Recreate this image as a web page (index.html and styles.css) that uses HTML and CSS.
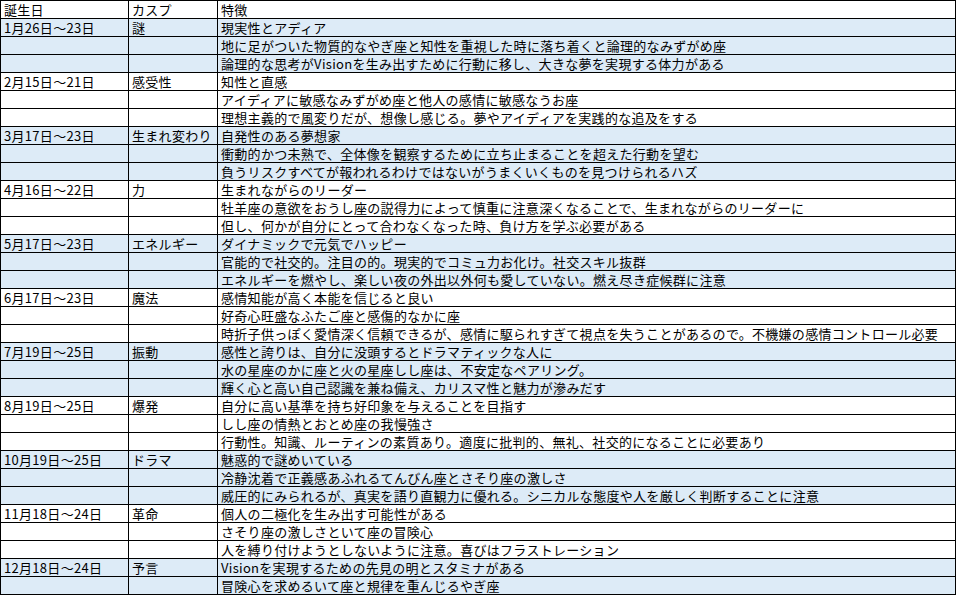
FILE: index.html
```html
<!DOCTYPE html>
<html lang="ja">
<head>
<meta charset="utf-8">
<title>カスプ</title>
<link rel="stylesheet" href="styles.css">
</head>
<body>
<div class="sheet">
  <div class="c">誕生日</div><div class="c">カスプ</div><div class="c">特徴</div>

  <div class="c b">1月26日～23日</div><div class="c b">謎</div><div class="c b">現実性とアディア</div>
  <div class="c b"></div><div class="c b"></div><div class="c b">地に足がついた物質的なやぎ座と知性を重視した時に落ち着くと論理的なみずがめ座</div>
  <div class="c b"></div><div class="c b"></div><div class="c b">論理的な思考がVisionを生み出すために行動に移し、大きな夢を実現する体力がある</div>

  <div class="c">2月15日～21日</div><div class="c">感受性</div><div class="c">知性と直感</div>
  <div class="c"></div><div class="c"></div><div class="c">アイディアに敏感なみずがめ座と他人の感情に敏感なうお座</div>
  <div class="c"></div><div class="c"></div><div class="c">理想主義的で風変りだが、想像し感じる。夢やアイディアを実践的な追及をする</div>

  <div class="c b">3月17日～23日</div><div class="c b">生まれ変わり</div><div class="c b">自発性のある夢想家</div>
  <div class="c b"></div><div class="c b"></div><div class="c b">衝動的かつ未熟で、全体像を観察するために立ち止まることを超えた行動を望む</div>
  <div class="c b"></div><div class="c b"></div><div class="c b">負うリスクすべてが報われるわけではないがうまくいくものを見つけられるハズ</div>

  <div class="c">4月16日～22日</div><div class="c">力</div><div class="c">生まれながらのリーダー</div>
  <div class="c"></div><div class="c"></div><div class="c">牡羊座の意欲をおうし座の説得力によって慎重に注意深くなることで、生まれながらのリーダーに</div>
  <div class="c"></div><div class="c"></div><div class="c">但し、何かが自分にとって合わなくなった時、負け方を学ぶ必要がある</div>

  <div class="c b">5月17日～23日</div><div class="c b">エネルギー</div><div class="c b">ダイナミックで元気でハッピー</div>
  <div class="c b"></div><div class="c b"></div><div class="c b">官能的で社交的。注目の的。現実的でコミュ力お化け。社交スキル抜群</div>
  <div class="c b"></div><div class="c b"></div><div class="c b">エネルギーを燃やし、楽しい夜の外出以外何も愛していない。燃え尽き症候群に注意</div>

  <div class="c">6月17日～23日</div><div class="c">魔法</div><div class="c">感情知能が高く本能を信じると良い</div>
  <div class="c"></div><div class="c"></div><div class="c">好奇心旺盛なふたご座と感傷的なかに座</div>
  <div class="c"></div><div class="c"></div><div class="c">時折子供っぽく愛情深く信頼できるが、感情に駆られすぎて視点を失うことがあるので。不機嫌の感情コントロール必要</div>

  <div class="c b">7月19日～25日</div><div class="c b">振動</div><div class="c b">感性と誇りは、自分に没頭するとドラマティックな人に</div>
  <div class="c b"></div><div class="c b"></div><div class="c b">水の星座のかに座と火の星座しし座は、不安定なペアリング。</div>
  <div class="c b"></div><div class="c b"></div><div class="c b">輝く心と高い自己認識を兼ね備え、カリスマ性と魅力が滲みだす</div>

  <div class="c">8月19日～25日</div><div class="c">爆発</div><div class="c">自分に高い基準を持ち好印象を与えることを目指す</div>
  <div class="c"></div><div class="c"></div><div class="c">しし座の情熱とおとめ座の我慢強さ</div>
  <div class="c"></div><div class="c"></div><div class="c">行動性。知識、ルーティンの素質あり。適度に批判的、無礼、社交的になることに必要あり</div>

  <div class="c b">10月19日～25日</div><div class="c b">ドラマ</div><div class="c b">魅惑的で謎めいている</div>
  <div class="c b"></div><div class="c b"></div><div class="c b">冷静沈着で正義感あふれるてんびん座とさそり座の激しさ</div>
  <div class="c b"></div><div class="c b"></div><div class="c b">威圧的にみられるが、真実を語り直観力に優れる。シニカルな態度や人を厳しく判断することに注意</div>

  <div class="c">11月18日～24日</div><div class="c">革命</div><div class="c">個人の二極化を生み出す可能性がある</div>
  <div class="c"></div><div class="c"></div><div class="c">さそり座の激しさといて座の冒険心</div>
  <div class="c"></div><div class="c"></div><div class="c">人を縛り付けようとしないように注意。喜びはフラストレーション</div>

  <div class="c b">12月18日～24日</div><div class="c b">予言</div><div class="c b">Visionを実現するための先見の明とスタミナがある</div>
  <div class="c b"></div><div class="c b"></div><div class="c b">冒険心を求めるいて座と規律を重んじるやぎ座</div>
</div>
</body>
</html>
```
FILE: styles.css
```css
html, body {
  margin: 0;
  padding: 0;
  background: #ffffff;
}

.sheet {
  display: grid;
  grid-template-columns: 127px 88px 737px;
  grid-auto-rows: 17px;
  gap: 1px;
  padding: 1px;
  width: 954px;
  background: #000000;
  font-family: "Noto Sans CJK JP", "Noto Sans", sans-serif;
  font-size: 13px;
  font-weight: 400;
  letter-spacing: 0.3px;
  color: #000000;
}

.c {
  background: #ffffff;
  padding: 1px 0 0 3px;
  line-height: 16px;
  height: 16px;
  white-space: nowrap;
}

.c.b {
  background: #ddebf7;
}
```
